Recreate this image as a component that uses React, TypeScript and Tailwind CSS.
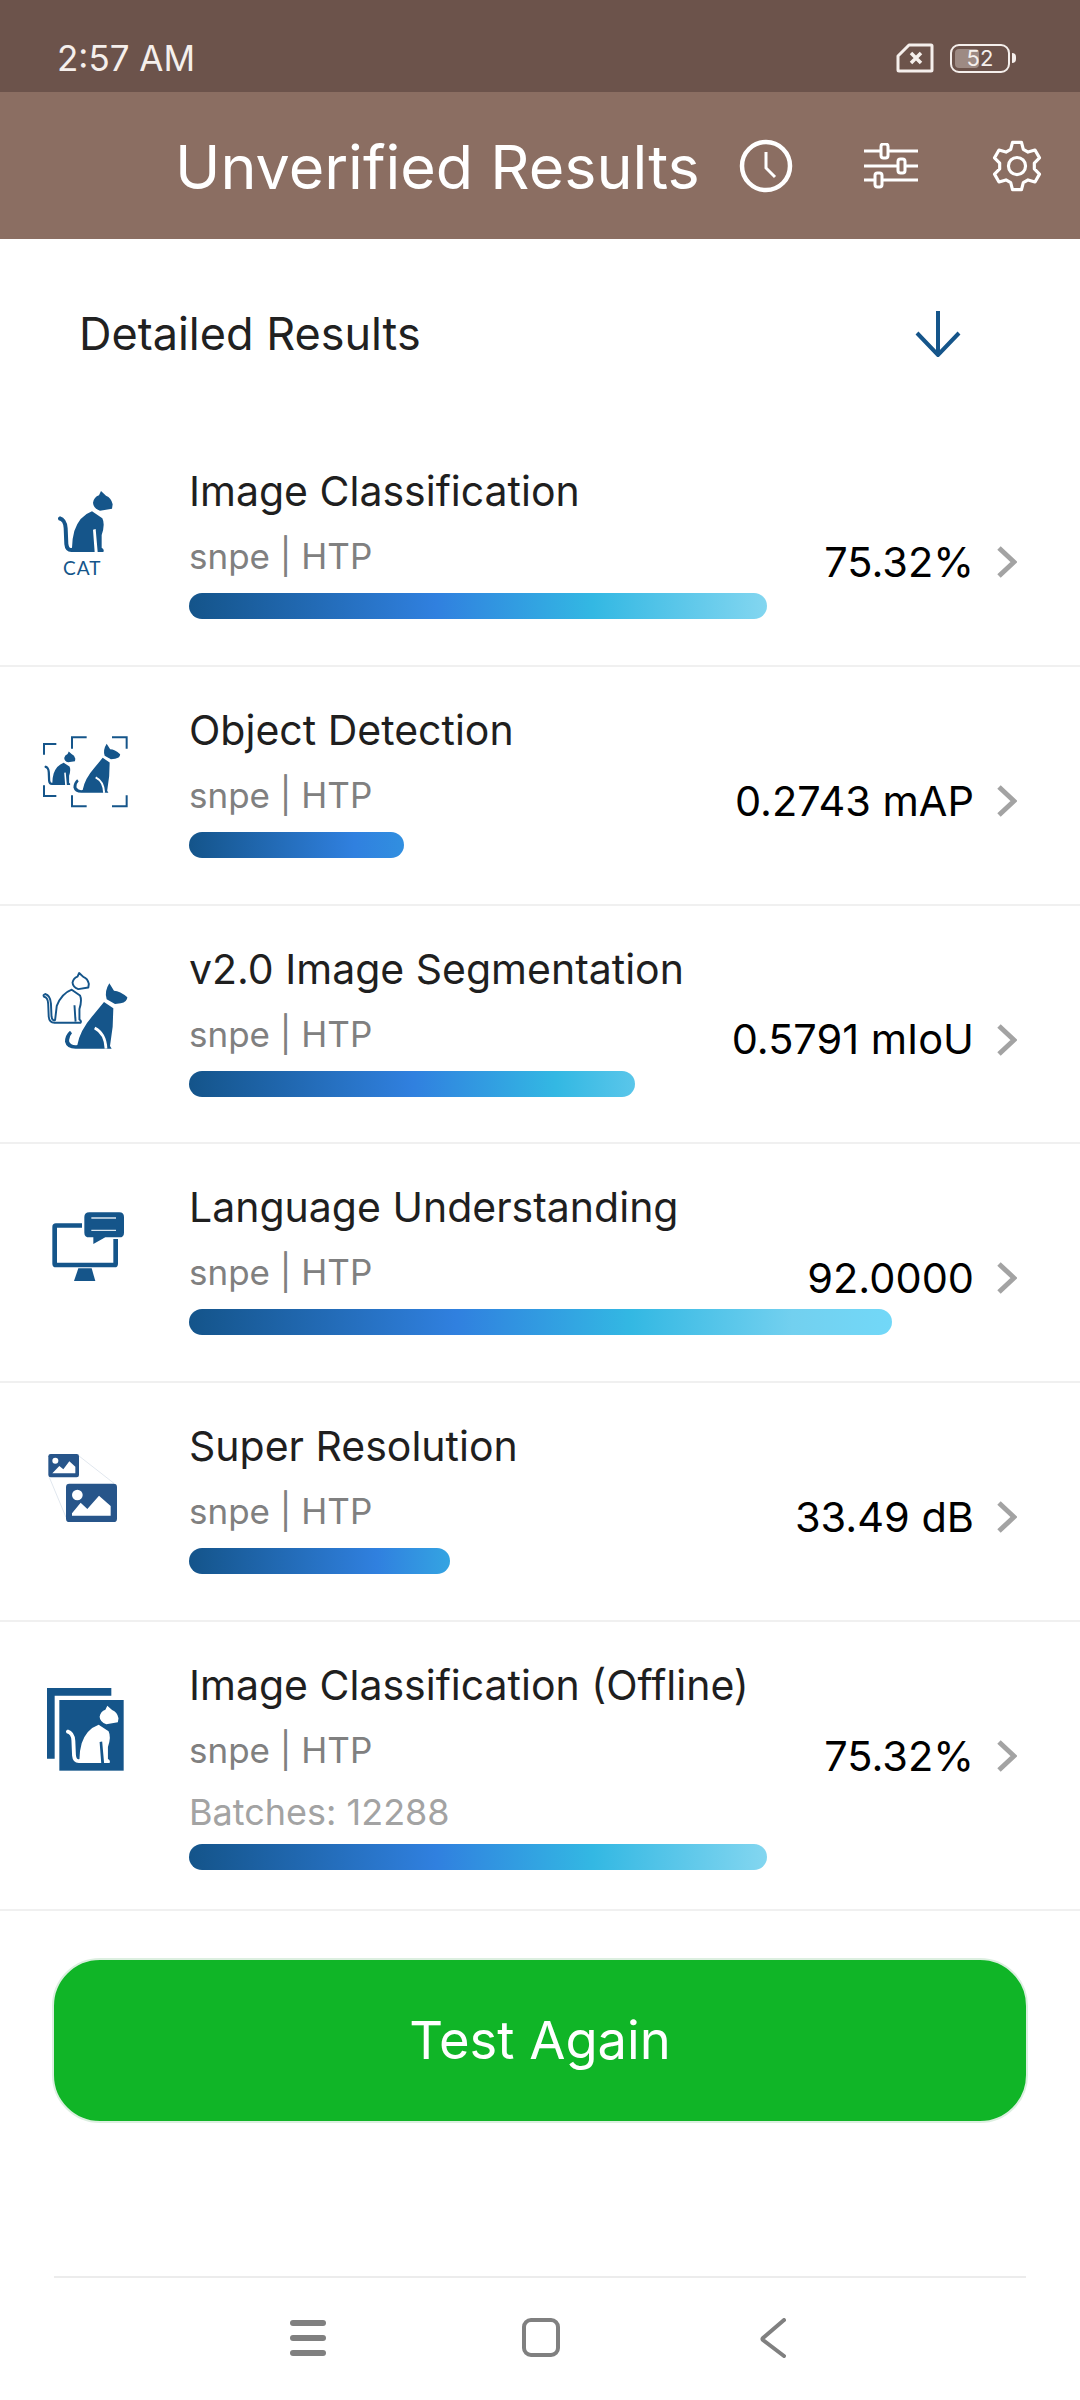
import React from 'react'

const BLUE = '#15558a'
const CAT_HEAD = 'M303 150 L318 164 Q334 170 338 190 L336 203 L300 209 Q280 202 279 185 Q282 168 297 163 Z'
const CAT_BODY =
  'M276 211 Q238 225 223 270 Q216 295 216 320 Q207 324 205 308 L203 262 Q201 232 180 226 Q170 230 176 238 Q190 240 191 262 L193 310 Q195 333 214 333 L284 333 L279 266 L287 264 L293 333 L310 333 Q314 325 305 320 L305 282 Q316 250 307 232 Z'

const DOG_HEAD = 'M328 130 L342 152 Q360 152 382 172 Q382 186 362 190 L345 192 L320 178 Q312 155 328 130 Z'
const DOG_BODY =
  'M312 186 L340 205 L338 260 L330 318 L335 326 L232 326 Q200 328 195 305 Q195 285 210 272 L216 280 Q205 292 208 306 Q216 318 232 315 Q240 270 280 225 Z'

const CatIcon = () => (
  <svg viewBox="171 147 171 267" className="h-[89px] w-[57px]">
    <path d={CAT_HEAD} fill={BLUE} />
    <path d={CAT_BODY} fill={BLUE} />
    <text x="247" y="401" textAnchor="middle" fontSize="57" letterSpacing="3" fill={BLUE} fontFamily="Lato, sans-serif">
      CAT
    </text>
  </svg>
)

const Corner = ({ d }: { d: string }) => <path d={d} fill="none" stroke={BLUE} strokeWidth="6" />

const DetectIcon = () => (
  <svg viewBox="126 885 261 219" className="h-[73px] w-[87px]">
    <Corner d="M169 912 H132 V944" />
    <Corner d="M132 1036 V1068 H169" />
    <Corner d="M260 892 H216 V926" />
    <Corner d="M336 892 H380 V926" />
    <Corner d="M216 1066 V1099 H260" />
    <Corner d="M336 1099 H380 V1066" />
    <g transform="translate(35 852) scale(0.565 0.55)">
      <path d={CAT_HEAD} fill={BLUE} />
      <path d={CAT_BODY} fill={BLUE} />
    </g>
    <g transform="translate(74 814) scale(0.75)">
      <path d={DOG_HEAD} fill={BLUE} />
      <path d={DOG_BODY} fill={BLUE} />
      <path d="M318 326 Q316 280 284 264" fill="none" stroke="#fff" strokeWidth="8" />
    </g>
  </svg>
)

const SegmentIcon = () => (
  <svg viewBox="126 96 261 234" className="h-[78px] w-[87px]">
    <g transform="translate(-14 -24) scale(0.83 0.82)" fill="none" stroke={BLUE} strokeWidth="7" strokeLinejoin="round">
      <path d={CAT_HEAD} />
      <path d="M276 211 Q240 225 222 270 L216 322 Q205 326 203 308 L201 262 Q199 232 180 227 Q171 230 176 237 Q190 240 191 262 L193 310 Q195 332 214 332 L308 332 Q312 325 304 320 L304 282 Q314 250 306 232 Z" />
      <path d="M286 268 L290 328" />
    </g>
    <path d={DOG_HEAD} fill={BLUE} />
    <path d={DOG_BODY} fill={BLUE} />
    <path d="M318 326 Q316 280 284 264" fill="none" stroke="#fff" strokeWidth="8" />
  </svg>
)

const LanguageIcon = () => (
  <svg viewBox="153 813 222 213" className="h-[71px] w-[74px]">
    <path
      d="M246 850 H168 Q157 850 157 861 V971 Q157 982 168 982 H344 Q354 982 354 971 V897 H340 V968 H171 V863 H246 Z"
      fill={BLUE}
    />
    <path d="M235 985 H275 L286 1023 H222 Z" fill={BLUE} />
    <path
      d="M268 817 H358 Q372 817 372 831 V878 Q372 892 358 892 H316 L280 912 V892 H268 Q253 892 253 878 V831 Q253 817 268 817 Z"
      fill={BLUE}
    />
    <path d="M274 834 H348 M274 871 H348" stroke="#dbe6ef" strokeWidth="4" />
  </svg>
)

const ResolutionIcon = () => (
  <svg viewBox="141 159 213 210" className="h-[70px] w-[71px]">
    <path d="M237 168 L342 250 M148 232 L198 352" stroke="#c3cfdc" strokeWidth="1.5" fill="none" />
    <rect x="145" y="162" width="92" height="70" rx="7" fill="#27558a" />
    <circle cx="166" cy="182" r="9" fill="#fff" />
    <path d="M157 220 L178 198 L190 208 L208 184 L226 200 V220 Z" fill="#fff" />
    <rect x="198" y="251" width="153" height="115" rx="10" fill="#27558a" />
    <circle cx="232" cy="285" r="16" fill="#fff" />
    <path d="M216 347 V340 L242 308 L262 327 L297 287 L332 318 V347 Z" fill="#fff" />
  </svg>
)

const OfflineIcon = () => (
  <svg viewBox="141 858 234 255" className="h-[85px] w-[78px]">
    <path d="M141 861 H334 V884 H164 V1073 H141 Z" fill={BLUE} />
    <rect x="178" y="897" width="193" height="212" fill={BLUE} />
    <g transform="translate(31 773) scale(0.96 0.94)" fill="#fff">
      <path d={CAT_HEAD} />
      <path d={CAT_BODY} />
    </g>
  </svg>
)

type Row = {
  title: string
  value: string
  bar: string
  icon: React.ReactNode
  iconBox: string
  batches?: string
}

const rows: Row[] = [
  {
    title: 'Image Classification',
    value: '75.32%',
    bar: 'w-[578px] bg-[linear-gradient(90deg,#14548a_0px,#3080df_247px,#33b8e3_404px,#83d6f0_578px)]',
    icon: <CatIcon />,
    iconBox: 'pl-[57px] pt-[62px]',
  },
  {
    title: 'Object Detection',
    value: '0.2743 mAP',
    bar: 'w-[215px] bg-[linear-gradient(90deg,#14548a_0px,#3080df_165px,#318fe0_215px)]',
    icon: <DetectIcon />,
    iconBox: 'pl-[42px] pt-[68px]',
  },
  {
    title: 'v2.0 Image Segmentation',
    value: '0.5791 mIoU',
    bar: 'w-[446px] bg-[linear-gradient(90deg,#14548a_0px,#3080df_224px,#33b8e3_367px,#5ac6ea_446px)]',
    icon: <SegmentIcon />,
    iconBox: 'pl-[42px] pt-[66px]',
  },
  {
    title: 'Language Understanding',
    value: '92.0000',
    bar: 'w-[703px] bg-[linear-gradient(90deg,#14548a_0px,#3080df_267px,#33b8e3_442px,#72d0ef_603px,#72d8f8_703px)]',
    icon: <LanguageIcon />,
    iconBox: 'pl-[51px] pt-[67px]',
  },
  {
    title: 'Super Resolution',
    value: '33.49 dB',
    bar: 'w-[261px] bg-[linear-gradient(90deg,#14548a_0px,#3080df_188px,#34a4e2_261px)]',
    icon: <ResolutionIcon />,
    iconBox: 'pl-[47px] pt-[70px]',
  },
  {
    title: 'Image Classification (Offline)',
    value: '75.32%',
    bar: 'w-[578px] bg-[linear-gradient(90deg,#14548a_0px,#3080df_247px,#33b8e3_404px,#83d6f0_578px)]',
    icon: <OfflineIcon />,
    iconBox: 'pl-[47px] pt-[65px]',
    batches: 'Batches: 12288',
  },
]

const ResultRow = ({ row }: { row: Row }) => (
  <div className={`relative flex border-b-2 border-[#f0f0f0] ${row.batches ? 'h-[289px]' : 'h-[238.75px]'}`}>
    <div className={`w-[189px] shrink-0 ${row.iconBox}`}>{row.icon}</div>
    <div className="flex-1">
      <div className="mt-[36px] h-[54px] text-[41px] leading-[54px] text-[#1f1f1f]">{row.title}</div>
      <div className="mt-[11px] h-[54px] text-[35px] leading-[54px] text-[#808080]">snpe | HTP</div>
      {row.batches && <div className="mt-[10px] h-[50px] text-[36px] leading-[50px] text-[#a3a3a3]">{row.batches}</div>}
      <div className={`mt-[10px] h-[26px] rounded-full ${row.batches ? '-translate-y-[3px]' : ''} ${row.bar}`} />
    </div>
    <div className="absolute right-[63px] top-[134px] flex h-[0px] items-center gap-[23px]">
      <span className="text-[41.5px] text-black">{row.value}</span>
      <svg viewBox="0 0 20 32" className="h-[32px] w-[20px]" fill="none" stroke="#a3a3a3" strokeWidth="5">
        <path d="M2 2 L17 16 L2 30" />
      </svg>
    </div>
  </div>
)

const StatusBar = () => (
  <div className="flex h-[92px] items-center justify-between bg-[#6c534b] pl-[57px] pr-[64px] pt-[24px] text-[#f5efec]">
    <span className="text-[35px] leading-none">2:57 AM</span>
    <div className="flex items-center gap-[16px]">
      <svg viewBox="0 0 38 30" className="h-[30px] w-[38px]" fill="none" stroke="#f5efec" strokeWidth="3" strokeLinejoin="round">
        <path d="M13 2 H35 Q36 2 36 3 V27 Q36 28 35 28 H3 Q2 28 2 27 V13 Z" />
        <path d="M15 10 L25 20 M25 10 L15 20" strokeWidth="3.5" />
      </svg>
      <div className="flex items-center gap-[2px]">
        <div className="relative flex h-[29px] w-[60px] items-center rounded-[9px] border-2 border-[#f5efec] p-[3px]">
          <div className="h-full w-[24px] rounded-[4px] bg-[#9d8a83]" />
          <span className="absolute inset-0 flex items-center justify-center text-[22px] leading-none">52</span>
        </div>
        <div className="h-[10px] w-[4px] rounded-r-full bg-[#f5efec]" />
      </div>
    </div>
  </div>
)

const Header = () => (
  <div className="flex h-[147px] items-center bg-[#8b6e62] text-white">
    <span className="ml-[175px] w-[564px] pt-[4px] text-[61px] leading-none">Unverified Results</span>
    <svg viewBox="0 0 54 54" className="h-[54px] w-[54px]" fill="none" stroke="#fff" strokeWidth="4.5">
      <circle cx="27" cy="27" r="24" />
      <path d="M27 13 V29 L36 38" strokeWidth="3" />
    </svg>
    <svg viewBox="0 0 54 46" className="ml-[71px] h-[46px] w-[54px]" fill="none" stroke="#fff" strokeWidth="3">
      <path d="M0 8 H54 M0 23 H54 M0 37 H54" />
      <rect x="17" y="1" width="7" height="14" rx="2.5" fill="#8b6e62" />
      <rect x="34" y="16" width="7" height="14" rx="2.5" fill="#8b6e62" />
      <rect x="11" y="30" width="7" height="14" rx="2.5" fill="#8b6e62" />
    </svg>
    <svg viewBox="0 0 24 24" className="ml-[72px] h-[54px] w-[54px]" fill="none" stroke="#fff" strokeWidth="1.4" strokeLinejoin="round">
      <path d="M10 1.5 H14 L14.8 4.6 L16.9 5.8 L20 4.9 L22 8.4 L19.7 10.7 V13.3 L22 15.6 L20 19.1 L16.9 18.2 L14.8 19.4 L14 22.5 H10 L9.2 19.4 L7.1 18.2 L4 19.1 L2 15.6 L4.3 13.3 V10.7 L2 8.4 L4 4.9 L7.1 5.8 L9.2 4.6 Z" />
      <circle cx="12" cy="12" r="3.8" />
    </svg>
  </div>
)

export default function App() {
  return (
    <div className="flex h-[2400px] w-[1080px] flex-col bg-white font-['Inter',sans-serif]">
      <StatusBar />
      <Header />
      <div className="flex h-[189px] items-center justify-between pl-[79px] pr-[119px]">
        <span className="text-[45px] text-[#212121]">Detailed Results</span>
        <svg viewBox="0 0 46 46" className="h-[46px] w-[46px]" fill="none" stroke={BLUE} strokeWidth="4">
          <path d="M23 0 V44 M2 22 L23 44 L44 22" />
        </svg>
      </div>
      <div>
        {rows.map((row) => (
          <ResultRow key={row.title} row={row} />
        ))}
      </div>
      <div className="mx-[52px] mt-[47px] flex h-[165px] items-center justify-center rounded-[48px] border-2 border-[#dcefe0] bg-[#10b527] text-[52.5px] text-white">
        Test Again
      </div>
      <div className="mx-[54px] mt-[153px] flex justify-center border-t-2 border-[#ececec] pr-[4px] pt-[40px]">
        <div className="flex items-center">
          <div className="flex w-[36px] flex-col gap-[9px]">
            <div className="h-[6px] rounded-full bg-[#808080]" />
            <div className="h-[6px] rounded-full bg-[#808080]" />
            <div className="h-[6px] rounded-full bg-[#808080]" />
          </div>
          <div className="ml-[196px] h-[39px] w-[38px] rounded-[9px] border-[4px] border-[#808080]" />
          <svg viewBox="0 0 26 40" className="ml-[200px] h-[40px] w-[26px]" fill="none" stroke="#808080" strokeWidth="4" strokeLinecap="round">
            <path d="M24 2 L3 20 Q2 21 3 22 L24 38" />
          </svg>
        </div>
      </div>
    </div>
  )
}
